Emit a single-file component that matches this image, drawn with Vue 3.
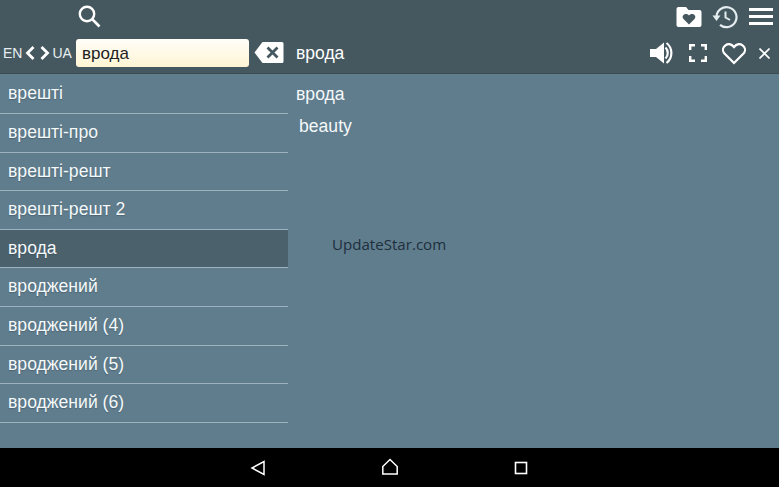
<script setup>
const words = ['врешті', 'врешті-про', 'врешті-решт', 'врешті-решт 2', 'врода', 'вроджений', 'вроджений (4)', 'вроджений (5)', 'вроджений (6)']
</script>

<template>
  <div class="screen">
    <header class="top">
      <div class="row1">
        <svg class="search" width="24" height="24" viewBox="0 0 24 24" fill="none" stroke="#fff">
          <circle cx="10" cy="10" r="7.2" stroke-width="2.4" />
          <path d="M15.5 15.5L22.5 22.5" stroke-width="2.6" />
        </svg>
        <div class="spacer"></div>
        <svg class="ic-folder" width="26" height="20" viewBox="0 0 26 20">
          <path fill="#fff" fill-rule="evenodd" d="M.5 2a2 2 0 0 1 2-2h7.500l2.500 3h11a2 2 0 0 1 2 2v13a2 2 0 0 1-2 2h-21a2 2 0 0 1-2-2zM13 17.500l-5.500-5.500c-2.800-3.200 2-7.200 5.500-3.500c3.500-3.700 8.300.3 5.500 3.500z" />
        </svg>
        <svg class="ic-hist" width="27" height="24" viewBox="0 0 27 24" fill="none" stroke="#e4edf0">
          <path d="M5.500 12A10 10 0 1 1 9 19.800" stroke-width="2.200" />
          <path d="M1.500 10.500h8l-4 5.500z" fill="#e4edf0" stroke="none" />
          <path d="M14.500 6.500v6l4.500 2.500" stroke-width="2" />
        </svg>
        <div class="burger"><i></i><i></i><i></i></div>
      </div>
      <div class="row2">
        <div class="lang">
          <span>EN</span>
          <svg width="10" height="14" viewBox="0 0 10 14" fill="none" stroke="#fff" stroke-width="2.800"><path d="M8.500 1L2.500 7L8.500 13" /></svg>
          <svg class="next" width="10" height="14" viewBox="0 0 10 14" fill="none" stroke="#fff" stroke-width="2.800"><path d="M1.500 1L7.500 7L1.500 13" /></svg>
          <span>UA</span>
        </div>
        <div class="input">врода</div>
        <svg class="clear" width="30" height="23" viewBox="0 0 30 23">
          <path fill="#fff" fill-rule="evenodd" d="M0.500 11.500L8.500 1h19.500a1.500 1.500 0 0 1 1.500 1.500v18a1.500 1.500 0 0 1-1.500 1.500H8.500z" />
          <path d="M13.500 6.500L23.500 16.500M23.500 6.500L13.500 16.500" stroke="#46585f" stroke-width="2.800" fill="none" />
        </svg>
        <div class="title">врода</div>
        <svg class="sound" width="24" height="22" viewBox="0 0 24 22">
          <path fill="#fff" d="M0 7h6l8-6.500v21l-8-6.500H0z" />
          <path fill="none" stroke="#fff" stroke-width="2.200" d="M15.500 5.500c3 3 3 8 0 11M16.500 1c6.500 5 6.500 15 0 20" />
        </svg>
        <svg class="full" width="18" height="18" viewBox="0 0 18 18" fill="none" stroke="#fff" stroke-width="2.400">
          <path d="M1.200 6V1.200H6M12 1.200h4.800V6M16.800 12v4.800H12M6 16.800H1.200V12" />
        </svg>
        <svg class="heart" width="26" height="23" viewBox="0 0 26 23" fill="none" stroke="#fff" stroke-width="2.200">
          <path d="M13 21L3 11C-1 5.500 7.500-2 13 5C18.500-2 27 5.500 23 11z" />
        </svg>
        <svg class="close" width="11" height="11" viewBox="0 0 11 11" fill="none" stroke="#fff" stroke-width="1.600">
          <path d="M.5.500l10 10M10.500.500l-10 10" />
        </svg>
      </div>
    </header>
    <main class="content">
      <ul class="list">
        <li v-for="w in words" :key="w" :class="{ active: w === 'врода' }">{{ w }}</li>
      </ul>
      <section class="detail">
        <div class="word">врода</div>
        <div class="trans">beauty</div>
        <div class="ad">UpdateStar.com</div>
      </section>
    </main>
    <footer class="nav">
      <svg width="16" height="16" viewBox="0 0 16 16" fill="none" stroke="#fff" stroke-width="1.500"><path d="M14 1.500V14.500L2 8z" /></svg>
      <svg width="18" height="18" viewBox="0 0 18 18" fill="none" stroke="#fff" stroke-width="1.500"><path d="M9 1.500L16.200 8.500V16H1.800V8.500z" /></svg>
      <svg width="14" height="14" viewBox="0 0 14 14" fill="none" stroke="#fff" stroke-width="1.600"><rect x="1.500" y="1.500" width="11" height="11" /></svg>
    </footer>
  </div>
</template>

<style>
body { margin: 0; }
</style>

<style scoped>
.screen {
  width: 779px;
  height: 487px;
  display: flex;
  flex-direction: column;
  overflow: hidden;
  font-family: "Liberation Sans", sans-serif;
  color: #fff;
  background: #607d8d;
}
.top {
  height: 74px;
  box-sizing: border-box;
  background: #46585f;
  border-bottom: 1px solid #3c4c52;
  flex: none;
}
.row1 {
  height: 33px;
  display: flex;
  align-items: center;
  padding-left: 77px;
  padding-right: 6px;
}
.search { margin-top: -1px; }
.spacer { flex: 1; }
.ic-folder { margin-right: 9px; }
.ic-hist { margin-right: 11px; }
.burger {
  width: 24px;
  height: 17px;
  display: flex;
  flex-direction: column;
  justify-content: space-between;
}
.burger i { display: block; height: 3px; background: #fff; }
.row2 {
  height: 40px;
  display: flex;
  align-items: center;
  padding-left: 3px;
}
.lang {
  width: 73px;
  display: flex;
  align-items: center;
  font-size: 14px;
  color: #e6eef1;
}
.lang svg { margin-left: 3px; }
.lang .next { margin-left: 5px; margin-right: 2px; }
.input {
  width: 173px;
  height: 28px;
  margin-top: -1px;
  box-sizing: border-box;
  padding-left: 6px;
  border-radius: 3px;
  background: linear-gradient(#fffef8, #fff5d4);
  color: #222;
  font-size: 17px;
  line-height: 29px;
}
.clear { margin-left: 5px; margin-top: -1px; }
.title {
  flex: 1;
  margin-left: 12px;
  font-size: 17.500px;
  padding-top: 1px;
}
.sound { margin-right: 15px; }
.full { margin-right: 14px; }
.heart { margin-right: 12px; }
.close { margin-right: 9px; }
.content {
  flex: 1;
  display: flex;
  min-height: 0;
  font-size: 17.600px;
}
.list {
  list-style: none;
  margin: 0;
  padding: 1.400px 0 0;
  width: 288px;
  flex: none;
}
.list li {
  height: 38.600px;
  line-height: 37px;
  box-sizing: border-box;
  padding-left: 8px;
  border-bottom: 1px solid #9db3bf;
  color: #f4f9fb;
  text-shadow: 0 1px 1px rgba(40, 55, 65, .35);
}
.list li.active { background: #4b626c; }
.detail { flex: 1; position: relative; padding-left: 8px; color: #f4f8fa; }
.word { height: 32px; line-height: 40px; }
.trans { padding-left: 3px; line-height: 41px; }
.ad {
  position: absolute;
  left: 44px;
  top: 160px;
  font-family: "Open Sans", "Liberation Sans", sans-serif;
  font-size: 15.100px;
  color: #1d2f3d;
}
.nav {
  height: 39px;
  flex: none;
  background: #000;
  display: flex;
  align-items: center;
  padding-left: 250px;
}
.nav svg:nth-child(1) { margin-right: 115px; }
.nav svg:nth-child(2) { margin-right: 115px; margin-top: -2px; }
</style>
